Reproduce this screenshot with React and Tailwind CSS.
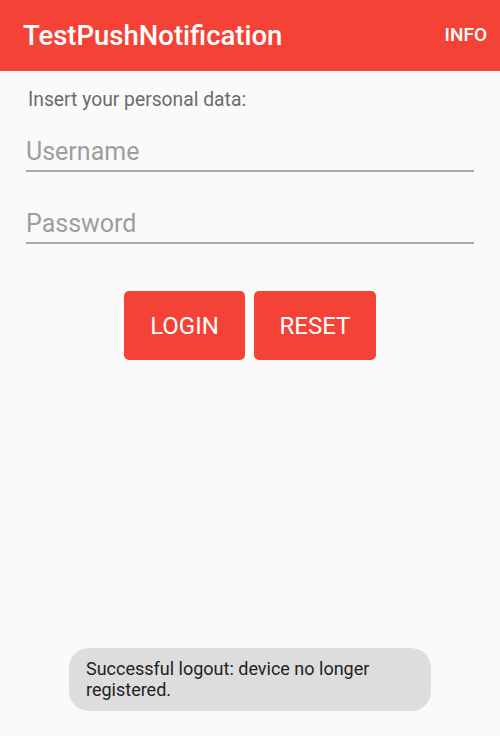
export default function App() {
  return (
    <div
      className="relative h-[736px] w-[500px] overflow-hidden bg-[#fafafa]"
      style={{ fontFamily: 'Roboto, "Liberation Sans", sans-serif' }}
    >
      {/* App bar */}
      <header className="flex h-[71px] items-center justify-between bg-[#f44336] pl-[23px] pr-[13px]">
        <h1 className="text-[27.5px] font-medium text-white">TestPushNotification</h1>
        <button className="text-[19px] font-medium text-white">INFO</button>
      </header>

      <main className="px-[26px] pt-[17px]">
        <p className="pl-[2px] text-[19.3px] leading-[24px] text-[#6b6b6b]">Insert your personal data:</p>

        <div className="mt-[24px] border-b-2 border-[#aaaaaa] pb-[2px]">
          <input
            className="h-[32px] w-full bg-transparent text-[25px] leading-[32px] text-[#333] outline-none placeholder:text-[#9e9e9e]"
            placeholder="Username"
          />
        </div>
        <div className="mt-[36px] border-b-2 border-[#aaaaaa] pb-[2px]">
          <input
            type="password"
            className="h-[32px] w-full bg-transparent text-[25px] leading-[32px] text-[#333] outline-none placeholder:text-[#9e9e9e]"
            placeholder="Password"
          />
        </div>

        <div className="mt-[47px] flex justify-center gap-[9px]">
          <button className="h-[69px] w-[121px] rounded-[5px] bg-[#f44336] text-[24px] text-white">LOGIN</button>
          <button className="h-[69px] w-[122px] rounded-[5px] bg-[#f44336] text-[24px] text-white">RESET</button>
        </div>
      </main>

      {/* Toast */}
      <div className="absolute left-[69px] top-[648px] h-[63px] w-[362px] rounded-[20px] bg-[#dddddd] px-[17px] pt-[10px] text-[18px] leading-[21px] text-[#222]">
        Successful logout: device no longer registered.
      </div>
    </div>
  );
}
